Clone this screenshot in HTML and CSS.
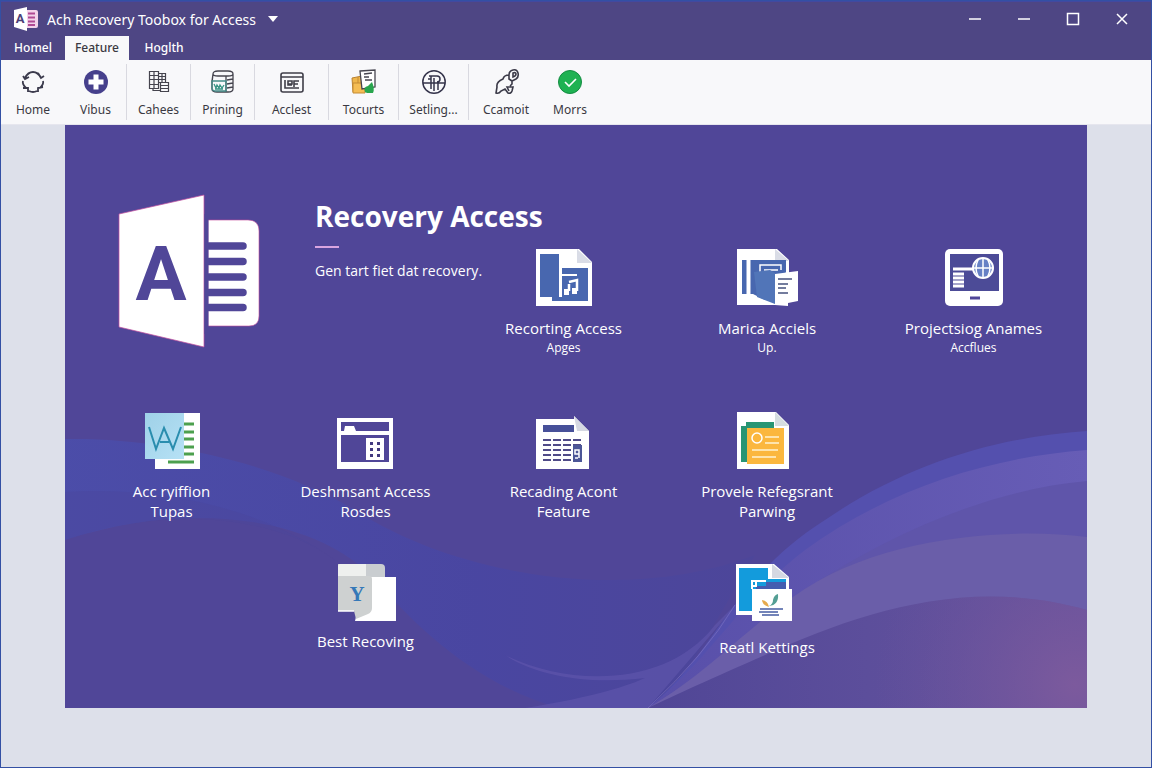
FILE: index.html
```html
<!DOCTYPE html>
<html lang="en">
<head>
<meta charset="utf-8">
<title>Ach Recovery Toobox for Access</title>
<link rel="stylesheet" href="styles.css">
</head>
<body>
<div class="window">
  <header class="titlebar">
    <div class="title-row">
      <svg class="app-logo" viewBox="0 0 24 24" aria-hidden="true">
        <path d="M13 3h9q2 0 2 2v14q0 2-2 2h-9z" fill="#f3d3ea"/>
        <path d="M14 6.500h7M14 10.500h7M14 14.500h7M14 18h7" stroke="#b04a94" stroke-width="1.800"/>
        <path d="M0 3L13 0v24L0 20z" fill="#fff"/>
        <text x="6" y="16" class="app-letter">A</text>
      </svg>
      <h1 class="app-title">Ach Recovery Toobox for Access</h1>
      <button class="title-menu" aria-label="Menu"><svg viewBox="0 0 10 6"><path d="M0 0h10L5 6z" fill="#fff"/></svg></button>
      <div class="controls">
        <button aria-label="Hide"><svg viewBox="0 0 14 14"><path d="M1 7h12" stroke="#fff" stroke-width="1.500"/></svg></button>
        <button aria-label="Minimize"><svg viewBox="0 0 14 14"><path d="M1 7h12" stroke="#fff" stroke-width="1.500"/></svg></button>
        <button aria-label="Maximize"><svg viewBox="0 0 14 14"><path d="M1.500 1.500h11v11h-11z" fill="none" stroke="#fff" stroke-width="1.500"/></svg></button>
        <button aria-label="Close"><svg viewBox="0 0 14 14"><path d="M2 2l10 10M12 2L2 12" stroke="#fff" stroke-width="1.500"/></svg></button>
      </div>
    </div>
    <nav class="tabs">
      <button class="tab">Homel</button>
      <button class="tab active">Feature</button>
      <button class="tab">Hoglth</button>
    </nav>
  </header>

  <div class="ribbon">
    <button class="tool w64">
      <svg viewBox="0 0 26 26" fill="none" stroke="#3b3a4c" stroke-width="1.800"><path d="M5 9Q8 3 13 3t8 6M3 12q-1 3 3 7M9 22q4 2 8 0M20 19q4-4 3-7M3 7l2 3 4-2M18 4l3 5 3-2M3 19h5v4M23 18l-5 1v4"/></svg>
      <span>Home</span>
    </button>
    <button class="tool w62 sep">
      <svg viewBox="0 0 26 26"><circle cx="13" cy="13" r="12" fill="#46408c"/><path d="M10.500 5.500h5v5h5v5h-5v5h-5v-5h-5v-5h5z" fill="#fff"/></svg>
      <span>Vibus</span>
    </button>
    <button class="tool w64 sep">
      <svg viewBox="0 0 26 26" fill="none" stroke="#45444e" stroke-width="1.200"><path d="M3.500 2.500h9v17h-9zM3.500 6.500h9M3.500 10.500h9M3.500 15.500h9M8 2.500v17M12.500 4.500h7v9h-7M12.500 7.500h7M12.500 10.500h7M16 4.500v9M14.500 13.500h8v9h-8zM14.500 16.500h8M14.500 19.500h8M7 19.500v2h7"/></svg>
      <span>Cahees</span>
    </button>
    <button class="tool w64 sep">
      <svg viewBox="0 0 26 26" fill="none" stroke="#45444e" stroke-width="1.300"><path d="M3 5Q3 2 8 2h10q5 0 5 3v15q0 3-5 3H7q-5 0-5-3V12zM3 5q0 2 5 2h10q5 0 5-2M3 5l-1 9M16 7v16M17 11l6-1M17 15l6-1M17 19l6-1"/><path d="M2 12h14v10H6q-4 0-4-3z" stroke="#448c88"/><path d="M4 15l2 4 1-3 2 3 1-3 2 3 2-3M5 20h8" stroke="#389585"/></svg>
      <span>Prining</span>
    </button>
    <button class="tool w74 sep">
      <svg viewBox="0 0 26 26" fill="none" stroke="#3f3e48" stroke-width="1.600"><rect x="2" y="4" width="22" height="19" rx="2"/><path d="M2 8h22M6 11v8h14M9 15h4v-3H9v4h4M15 18v-6h5M15 15h4"/></svg>
      <span>Acclest</span>
    </button>
    <button class="tool w70 sep">
      <svg viewBox="0 0 26 26"><path d="M1 9l10-2v16H2z" fill="#efb64b" stroke="#b98232"/><path d="M2 14h12v10H2zM7 8v6" fill="#f5bd54" stroke="#c48b35"/><path d="M9 2l15-1v17l-13 2z" fill="#fff" stroke="#474650" stroke-width="1.300"/><path d="M13 5l8-1M13 8h5M14 11h7" stroke="#474650" stroke-width="1.500"/><path d="M14 23q-2-5 3-6l4-4q3 7 1 11h-6z" fill="#28a54d"/></svg>
      <span>Tocurts</span>
    </button>
    <button class="tool w70 sep">
      <svg viewBox="0 0 26 26" fill="none" stroke="#34334a" stroke-width="1.500"><circle cx="13" cy="13" r="11.200"/><path d="M2 14h22M8 7h8q3 0 3 3t-3 3M10 7v13M13 9v13M17 13v8M7 10h3"/></svg>
      <span>Setling...</span>
    </button>
    <button class="tool w74">
      <svg viewBox="0 0 26 26" fill="none" stroke="#3b3a48" stroke-width="1.600"><path d="M16 6Q11 6 10 10Q3 13 4 18L3 24Q6 25 8 22l4-2 3 4q3 1 4-2l1-4h-6l2 4M16 6q0-4 4-5t5 3-2 6l-4 2v3l-2 2M16 6v4l3 2M20 4q3-1 3 1t-3 3z"/></svg>
      <span>Ccamoit</span>
    </button>
    <button class="tool w54">
      <svg viewBox="0 0 26 26"><circle cx="13" cy="13" r="11.500" fill="#1fb252" stroke="#148c42"/><path d="M8 13l4 4 7-7" fill="none" stroke="#fff" stroke-width="1.600"/></svg>
      <span>Morrs</span>
    </button>
  </div>

  <main class="stage">
    <section class="panel">
      <svg class="waves" viewBox="0 0 1022 583" preserveAspectRatio="none" aria-hidden="true">
        <defs>
          <linearGradient id="left" x1="0" y1="0" x2="1" y2="0"><stop offset="0" stop-color="#4a4fae"/><stop offset=".6" stop-color="#4746a4"/><stop offset="1" stop-color="#4c469a"/></linearGradient>
          <linearGradient id="stripe" x1="583" x2="1022" gradientUnits="userSpaceOnUse"><stop offset="0" stop-color="#584fa9"/><stop offset="1" stop-color="#675db6"/></linearGradient>
          <linearGradient id="floor" x1="583" x2="1022" gradientUnits="userSpaceOnUse"><stop offset="0" stop-color="#504696"/><stop offset=".5" stop-color="#5c4e9b"/><stop offset="1" stop-color="#69539d"/></linearGradient>
          <radialGradient id="rose" cx="1010" cy="560" r="200" gradientUnits="userSpaceOnUse"><stop offset="0" stop-color="#7c5a9d"/><stop offset="1" stop-color="#69539d" stop-opacity="0"/></radialGradient>
        </defs>
        <path d="M0 314C100 312 215 340 290 385C390 450 560 480 690 430L600 583H495C410 560 350 500 310 455C250 390 120 375 0 415z" fill="url(#left)" opacity=".75"/>
        <path d="M0 367C120 360 215 395 270 435C210 390 100 380 0 415z" fill="#4b459a" opacity=".4"/>
        <path d="M440 530C500 560 600 565 650 500L680 470L583 583H460C530 572 565 560 580 553C520 560 470 550 440 530z" fill="#5e54ab" opacity=".7"/>
        <path d="M1022 306C930 312 840 340 760 395C665 455 650 530 583 583H1022z" fill="#5450ae"/>
        <path d="M1022 325C930 332 830 360 740 425C680 470 640 540 583 583H1022z" fill="url(#stripe)"/>
        <path d="M1022 356C930 364 830 405 740 465C680 510 640 550 583 583H1022z" fill="#5f55aa"/>
        <path d="M1022 412C940 402 810 412 728 472C680 505 640 550 583 583H1022z" fill="#6a5ea9"/>
        <path d="M1022 485C900 450 790 490 700 530C650 552 610 570 583 583H1022z" fill="url(#floor)"/>
        <path d="M1022 485C900 450 790 490 700 530L583 583H1022z" fill="url(#rose)"/>
        <path d="M583 583Q640 530 670 480" fill="none" stroke="#7f73c2" opacity=".6"/>
      </svg>

      <div class="hero">
        <svg class="hero-logo" viewBox="0 0 142 154" role="img" aria-label="Access">
          <path d="M1 20L86 1v152L1 133z" fill="#fff" stroke="#c44f9f" stroke-opacity=".7"/>
          <path d="M90 26h40q11 0 11 11v85q0 10-10 10H90z" fill="#fff" stroke="#c44f9f" stroke-opacity=".6"/>
          <path d="M91 52h34M91 67.500h34M91 83h34M91 98.500h34M91 113.500h34" stroke="#504698" stroke-width="7.500" stroke-linecap="round"/>
          <path d="M86.500 20h4v120h-4z" fill="#504698"/>
          <text x="43" y="106" class="hero-letter">A</text>
        </svg>
        <div class="hero-text">
          <h2>Recovery Access</h2>
          <hr>
          <p>Gen tart fiet dat recovery.</p>
        </div>
      </div>

      <button class="tile first c3">
        <svg viewBox="0 0 58 58"><path d="M1 1h43l13 13v44H1z" fill="#fff"/><path d="M42 1l15 14H42z" fill="#d9dce6"/><path d="M5 6h19v43H5z" fill="#4867af"/><path d="M27 20h26v33H17v-4h10z" fill="#4867af"/><path d="M27 27h15" stroke="#fff" stroke-width="2"/><path d="M34 43V36M34 34l8-2v11" fill="none" stroke="#fff" stroke-width="2.500"/><path d="M29 41h5v6h-5zM37 40h5v6h-5z" fill="#fff"/></svg>
        <span>Recorting Access</span><small>Apges</small>
      </button>
      <button class="tile first c4">
        <svg viewBox="0 0 58 58"><path d="M-1 1h40l12 11v22H44v23H-1z" fill="#fff"/><path d="M37 1l14 12H37z" fill="#d9dce6"/><path d="M4 12h44v12L36 50 27 52l-12-6H4z" fill="#4867af"/><path d="M10.500 11v36" stroke="#fff" stroke-width="4"/><path d="M22 25v-8h21v5M26 22h14" fill="none" stroke="#fff" stroke-width="1.500"/><path d="M16 24l16-2 5 3v31l-18-7z" fill="#5175b8"/><path d="M37 26l23-3v30l-10 2v3l-13-1z" fill="#fff"/><path d="M40 31h14M40 36h10M40 40h8M40 45h10" stroke="#46517e" stroke-width="1.500"/></svg>
        <span>Marica Acciels</span><small>Up.</small>
      </button>
      <button class="tile first c5">
        <svg viewBox="0 0 58 58"><rect y="1" width="58" height="57" rx="5" fill="#fff"/><path d="M5 6h49v37H5z" fill="#4c4b97"/><path d="M8 21h21M8 26h11M8 30h11M8 34h11M8 38h11" stroke="#fff" stroke-width="3"/><circle cx="38" cy="20" r="10" fill="#6681c5" stroke="#fff" stroke-width="2"/><path d="M28 20h20M38 10v20M33 12q-4 8 0 16M43 12q4 8 0 16" stroke="#fff" stroke-width="1.500" fill="none"/><path d="M25 50h10" stroke="#504698" stroke-width="3"/></svg>
        <span>Projectsiog Anames</span><small>Accflues</small>
      </button>

      <button class="tile c1">
        <svg viewBox="0 0 58 58"><defs><linearGradient id="sky" x1="0" y1="0" x2="1" y2="1"><stop stop-color="#9fd1e8"/><stop offset="1" stop-color="#b6e1f5"/></linearGradient></defs><path d="M12 2h45v56H12z" fill="#fff"/><path d="M38 13h13M38 21h13M38 28h13M38 36h13M38 43h13M25 51h26" stroke="#4ca04e" stroke-width="3"/><path d="M2 2h39v46H2z" fill="url(#sky)"/><path d="M6 16l7 22 8-21 9 21 8-22M17 31h9" fill="none" stroke="#298dae" stroke-width="2"/></svg>
        <span>Acc ryiffion</span><span>Tupas</span>
      </button>
      <button class="tile c2">
        <svg viewBox="0 0 58 58"><path d="M1 7h56v51H1z" fill="#fff"/><path d="M5 11h48v9H20l-2-5H9l-1 5H5zM5 24h48v27H5z" fill="#504698"/><path d="M30 27h18v22H30z" fill="#fff"/><path d="M34 31h3v3h-3zM41 31h3v3h-3zM34 37h3v3h-3zM41 37h3v3h-3zM34 43h3v3h-3zM41 43h3v3h-3z" fill="#423a80"/></svg>
        <span>Deshmsant Access</span><span>Rosdes</span>
      </button>
      <button class="tile c3">
        <svg viewBox="0 0 58 58"><path d="M1 8h38V5l15 15v38H1z" fill="#fff"/><path d="M39 5l15 15H42z" fill="#d5d8e2"/><path d="M8 14h31v7H8z" fill="#475099"/><path d="M8 29h39M8 34h39M8 39h39M8 44h39M8 49h39" stroke="#504b88" stroke-width="2" stroke-dasharray="8 2"/><path d="M38 34h9v17h-9z" fill="#4c5697"/><path d="M44 47v-8h-4v4h4M40 47h3" fill="none" stroke="#fff" stroke-width="1.500"/></svg>
        <span>Recading Acont</span><span>Feature</span>
      </button>
      <button class="tile c4">
        <svg viewBox="0 0 58 58"><path d="M-1 1h39l13 13v44H-1z" fill="#fff"/><path d="M37 1l14 14H37z" fill="#d5dde0"/><path d="M8 11h28v6H14v34H3V15h5z" fill="#289574"/><path d="M9 17h37v36H9z" fill="#fbb73e"/><circle cx="19" cy="27" r="5" fill="none" stroke="#fff" stroke-width="1.500"/><path d="M27 26h14M27 32h14M14 39h26M14 46h24" stroke="#fff3d2" stroke-width="1.500"/></svg>
        <span>Provele Refegsrant</span><span>Parwing</span>
      </button>

      <button class="tile last c2">
        <svg viewBox="0 0 58 58"><path d="M1 1h43q4 0 4 4v10H1z" fill="#c9cdd0"/><path d="M1 3q0-2 2-2h26v12H1z" fill="#eef0ee"/><path d="M29 14h30v44H18z" fill="#fff"/><path d="M1 13h31q3 0 3 3v29q0 4-4 6l-12 5-2-8H1z" fill="#ced1d1"/><path d="M1 48h16" stroke="#fff" stroke-width="1.500"/><text x="20" y="38" class="y-letter">Y</text></svg>
        <span>Best Recoving</span>
      </button>
      <button class="tile last low c4">
        <svg viewBox="0 0 58 58"><path d="M-2 1h38l15 13v38H-2z" fill="#fff"/><path d="M1 5h29v11h18v12H15v20H1z" fill="#139bdc"/><path d="M28 19h20v8H18v-4h10z" fill="#445db0"/><path d="M14 26v-8h14M18 18v5h-3" fill="none" stroke="#fff" stroke-width="2"/><path d="M34 1l17 14H34z" fill="#d5d8e2"/><path d="M14 26h40v32H14z" fill="#fff"/><path d="M24 37q0 5 7 7-1-6-7-7" fill="#e6aa4d"/><path d="M31 43q10-1 9-12-4 1-5 6 0 4-4 6z" fill="#549f94"/><path d="M22 46h23M21 49h19M24 52h17" stroke="#455ca3" stroke-width="1.300"/></svg>
        <span>Reatl Kettings</span>
      </button>
    </section>
  </main>
</div>
</body>
</html>
```
FILE: styles.css
```css
* { box-sizing: border-box; }

body {
  margin: 0;
  font-family: "Noto Sans", "Open Sans", sans-serif;
  color: #3a3942;
}

button {
  font: inherit;
  color: inherit;
  background: none;
  border: 0;
  padding: 0;
}

svg { display: block; overflow: visible; }

.window {
  min-height: 100vh;
  display: flex;
  flex-direction: column;
  background: #dde0ea;
  border: 1px solid #3350a4;
}

.titlebar {
  background: #4e4684;
  color: #fff;
  border-top: 1px solid #4149a0;
}

.title-row {
  height: 34px;
  display: flex;
  align-items: center;
  padding: 0 5px 0 13px;
}

.app-logo { width: 24px; height: 24px; }
.app-letter { font: 700 13px Roboto, sans-serif; fill: #4b3f78; text-anchor: middle; }

.app-title {
  margin: 0 12px 0 9px;
  font-size: 14px;
  font-weight: 400;
  white-space: nowrap;
}

.title-menu svg { width: 10px; height: 6px; }
.controls { display: flex; margin-left: auto; }
.controls button { width: 49px; height: 32px; display: grid; place-items: center; }
.controls svg { width: 14px; height: 14px; }

.tabs { display: flex; height: 24px; }

.tab {
  min-width: 64px;
  padding: 0 10px 2px;
  font-size: 12px;
  font-weight: 500;
}

.tab.active { background: #f8f8fa; color: #3a3942; }
.tab:last-child { min-width: 70px; }

.ribbon {
  display: flex;
  align-items: center;
  height: 65px;
  background: #f8f8fa;
  border-bottom: 1px solid #e6e6ee;
}

.tool {
  display: flex;
  flex-direction: column;
  align-items: center;
  gap: 5px;
  height: 56px;
  padding-top: 5px;
  font-size: 12px;
  line-height: 20px;
}

.tool svg { width: 26px; height: 26px; }
.sep { border-right: 1px solid #d9d9e0; }
.w54 { width: 54px; }
.w62 { width: 62px; }
.w64 { width: 64px; }
.w70 { width: 70px; }
.w74 { width: 74px; }

.stage {
  flex: 1;
  display: flex;
  padding: 0 64px 59px;
}

.panel {
  position: relative;
  flex: 1;
  display: grid;
  grid-template-columns: 193fr 195fr 201fr 206fr 207fr;
  grid-template-rows: auto auto 1fr;
  row-gap: 42px;
  padding: 69px 10px 40px;
  background: #504698;
  color: #fff;
}

.waves {
  position: absolute;
  inset: 0;
  width: 100%;
  height: 100%;
}

.hero {
  position: relative;
  grid-column: 1 / 4;
  grid-row: 1;
  display: flex;
  align-items: flex-start;
  gap: 55px;
  padding-left: 43px;
  padding-bottom: 21px;
}

.hero-logo { width: 142px; height: 154px; }
.hero-letter { font: 700 76px Roboto, sans-serif; fill: #504698; text-anchor: middle; }

.hero-text { padding-top: 4px; white-space: nowrap; font-family: "Open Sans", sans-serif; }
.hero-text h2 { margin: 0; font-size: 28px; line-height: 36px; font-weight: 700; }
.hero-text hr { width: 24px; height: 2px; margin: 12px 0; border: 0; background: #d9a5e0; }
.hero-text p { margin: 0; font-size: 14px; line-height: 22px; }

.tile {
  position: relative;
  grid-row: 2;
  justify-self: center;
  align-self: start;
  display: flex;
  flex-direction: column;
  align-items: center;
  font-family: "Open Sans", sans-serif;
  font-size: 15px;
  font-weight: 500;
  line-height: 20px;
  white-space: nowrap;
}

.tile svg { width: 58px; height: 58px; margin-bottom: 12px; }
.tile small { font-size: 12px; }
.tile.first { grid-row: 1; align-self: end; padding-bottom: 11px; }
.tile.last { grid-row: 3; }
.tile.last svg { margin-bottom: 10px; }
.tile.low svg { margin-bottom: 16px; }
.c1 { grid-column: 1; }
.c2 { grid-column: 2; }
.c3 { grid-column: 3; }
.c4 { grid-column: 4; }
.c5 { grid-column: 5; }

.y-letter { font: 700 21px "Liberation Serif", serif; fill: #3478b8; text-anchor: middle; }
```
